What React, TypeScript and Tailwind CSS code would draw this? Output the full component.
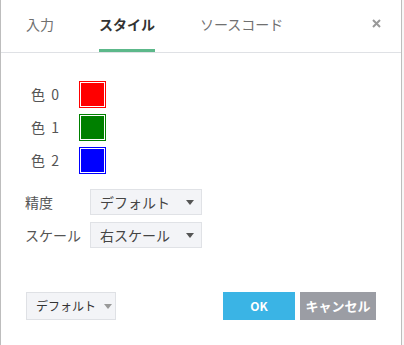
import { useState } from "react";

const COLORS = [
  { label: "色 0", fill: "#ff0000" },
  { label: "色 1", fill: "#008000" },
  { label: "色 2", fill: "#0000ff" },
];

const TABS = ["入力", "スタイル", "ソースコード"];

function Caret({ className = "" }: { className?: string }) {
  return (
    <svg width="8" height="5" viewBox="0 0 8 5" className={className} aria-hidden>
      <path d="M0 0h8L4 5z" fill="currentColor" />
    </svg>
  );
}

function Select({ value }: { value: string }) {
  return (
    <button
      type="button"
      className="flex h-[26px] w-[112px] items-center justify-between whitespace-nowrap border border-[#e0e2e6] bg-[#f3f4f7] pl-[9px] pr-[7px] text-[14px] text-[#444]"
    >
      <span>{value}</span>
      <Caret className="text-[#555]" />
    </button>
  );
}

export default function App() {
  const [tab, setTab] = useState(1);

  return (
    <div
      className="flex h-[345px] w-[404px] overflow-hidden bg-white"
      style={{ fontFamily: '"Noto Sans CJK JP", "Noto Sans", sans-serif' }}
    >
      <div className="flex h-[345px] w-[402px] flex-col border-x border-[#bdbdbd] bg-white">
        {/* Header tabs */}
        <div className="flex h-[53px] items-stretch border-b border-[#dfe1e5] pl-[25px] pr-[20px]">
          <div className="flex gap-[45px]">
            {TABS.map((t, i) => {
              const on = tab === i;
              return (
                <button
                  key={t}
                  type="button"
                  onClick={() => setTab(i)}
                  className={`flex h-full items-start whitespace-nowrap border-b-[3px] pt-[13px] text-[14px] leading-[22px] ${
                    on
                      ? "border-[#5cb88a] font-bold text-[#333]"
                      : "border-transparent text-[#707070]"
                  }`}
                >
                  {t}
                </button>
              );
            })}
          </div>
          <button type="button" aria-label="Close" className="ml-auto mt-[19px] h-[9px] w-[9px] text-[#999]">
            <svg width="9" height="9" viewBox="0 0 9 9" aria-hidden>
              <path d="M1 1l7 7M8 1L1 8" stroke="currentColor" strokeWidth="2" />
            </svg>
          </button>
        </div>

        {/* Colours */}
        <div className="flex flex-col gap-[6px] pl-[30px] pt-[28px]">
          {COLORS.map((c) => (
            <div key={c.label} className="flex items-center">
              <span className="w-[48px] whitespace-pre text-[14px] text-[#555]">{c.label.replace(" ", "  ")}</span>
              <span
                className="h-[27px] w-[27px] border p-px"
                style={{ borderColor: c.fill }}
              >
                <span className="block h-full w-full" style={{ background: c.fill }} />
              </span>
            </div>
          ))}
        </div>

        {/* Selects */}
        <div className="mt-[15px] flex flex-col gap-[7px] pl-[24px]">
          <div className="flex items-center">
            <span className="w-[65px] text-[14px] text-[#555]">精度</span>
            <Select value="デフォルト" />
          </div>
          <div className="flex items-center">
            <span className="w-[65px] text-[14px] text-[#555]">スケール</span>
            <Select value="右スケール" />
          </div>
        </div>

        {/* Footer */}
        <div className="mt-[44px] flex items-center pl-[25px] pr-[25px]">
          <button
            type="button"
            className="flex h-[28px] w-[90px] items-center gap-[8px] whitespace-nowrap border border-[#dfe1e5] bg-[#f3f4f7] pl-[9px] text-[12px] text-[#333]"
          >
            デフォルト
            <Caret className="text-[#999]" />
          </button>
          <button
            type="button"
            className="ml-auto h-[28px] w-[72px] bg-[#3ab4e5] text-[12px] font-bold text-white"
          >
            OK
          </button>
          <button
            type="button"
            className="ml-[5px] h-[28px] w-[76px] whitespace-nowrap bg-[#9b9da4] text-[13px] font-bold text-white"
          >
            キャンセル
          </button>
        </div>
      </div>
      <div className="flex-1 bg-[#f7f7f7]" />
    </div>
  );
}
